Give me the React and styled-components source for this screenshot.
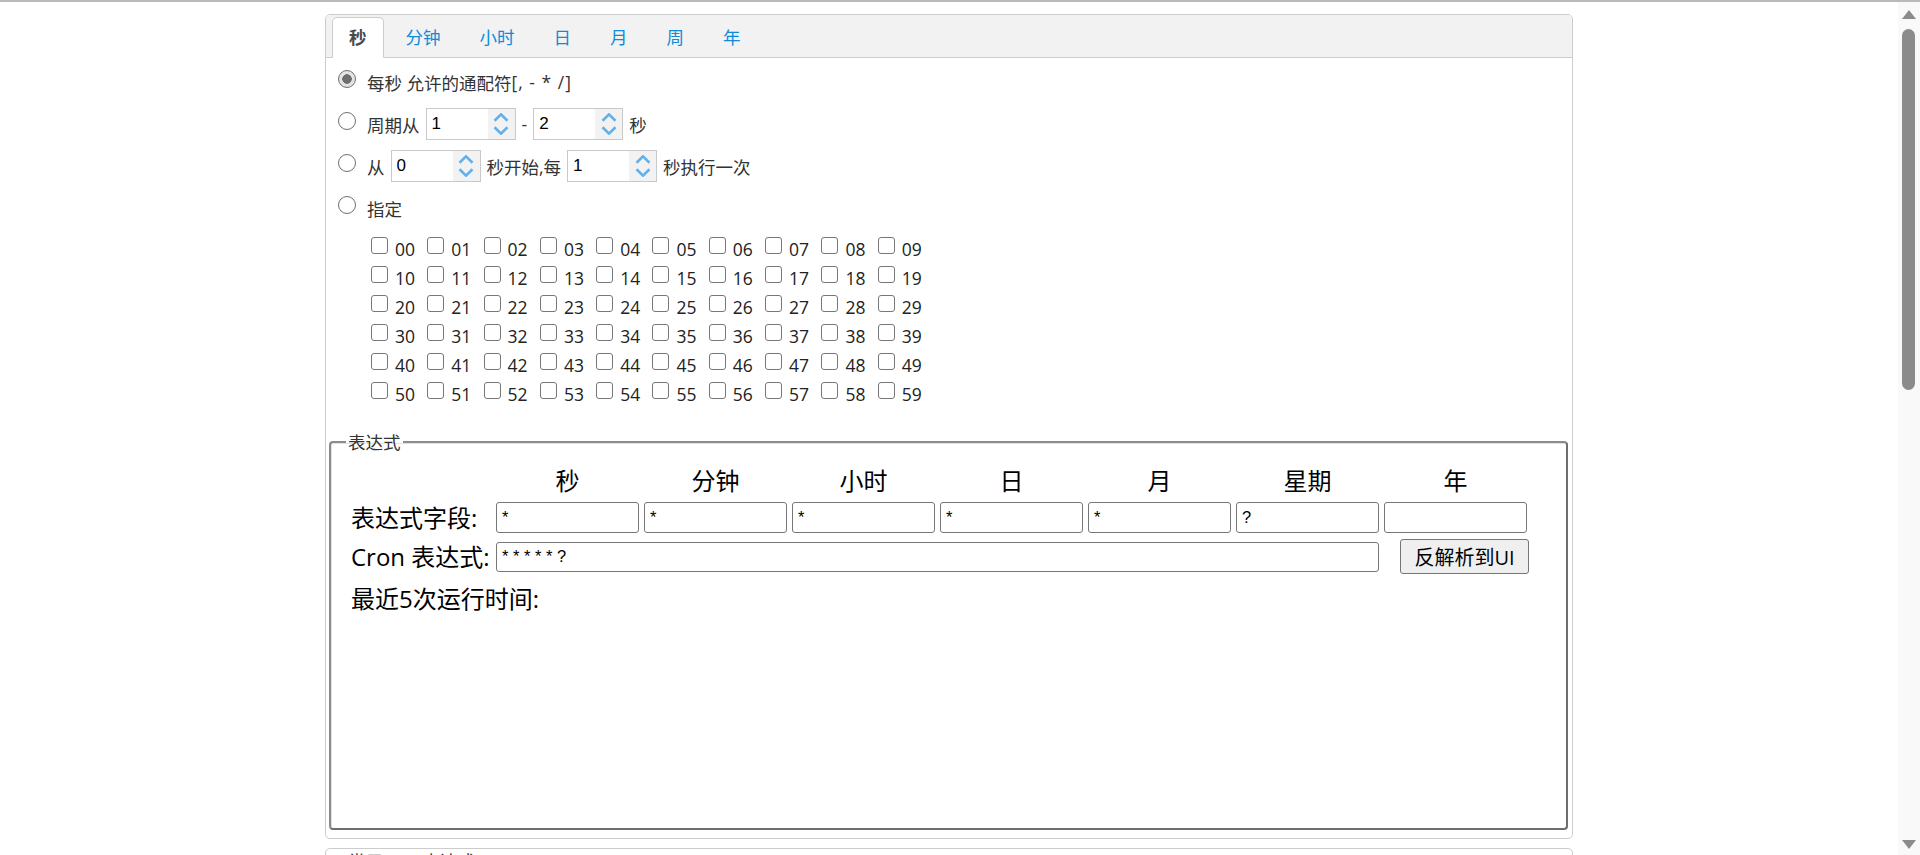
import styled, { createGlobalStyle } from "styled-components";

const GlobalStyle = createGlobalStyle`
  html {
    background: #fff;
    scrollbar-width: none;
  }
  body {
    margin: 0;
    border-top: 2px solid #b9b9b9;
    font-family: "Open Sans", "Noto Sans CJK SC", sans-serif;
    color: #333;
  }
`;

const Page = styled.div`
  padding: 12px 22px 10px 0;
`;

/* drawing of the window scrollbar, pinned over the right edge */
const ScrollRail = styled.div`
  position: fixed;
  top: 2px;
  right: 0;
  bottom: 0;
  width: 22px;
  display: flex;
  flex-direction: column;
  align-items: center;
  background: #f9f9f9;
`;

const RailArrow = styled.div`
  width: 0;
  height: 0;
  margin: ${({ $down }) => ($down ? "0 1px 6px 0" : "8px 1px 0 0")};
  border-left: 7px solid transparent;
  border-right: 7px solid transparent;
  ${({ $down }) =>
    $down ? "border-top: 9px solid #8b8b8b;" : "border-bottom: 9px solid #8b8b8b;"}
`;

const RailThumb = styled.div`
  width: 13px;
  height: 361px;
  margin: 10px 1px 0 0;
  border-radius: 7px;
  background: #8b8b8b;
`;

const RailSpace = styled.div`
  flex: 1;
`;

const Panel = styled.div`
  width: 1246px;
  margin: ${({ $second }) => ($second ? "9px auto 0" : "0 auto")};
  border: 1px solid #cccccc;
  border-radius: 5px;
  overflow: hidden;
  background: #fff;
`;

const TabBar = styled.div`
  display: flex;
  align-items: flex-end;
  height: 42px;
  padding-left: 6px;
  background: #f2f2f2;
  border-bottom: 1px solid #cccccc;
`;

const Tab = styled.div`
  height: 39px;
  line-height: 39px;
  padding: 0 16px;
  margin-right: 5px;
  margin-bottom: -1px;
  font-size: 17.5px;
  border: 1px solid ${({ $active }) => ($active ? "#cccccc" : "transparent")};
  border-bottom-color: ${({ $active }) => ($active ? "#fff" : "transparent")};
  border-radius: 5px 5px 0 0;
  background: ${({ $active }) => ($active ? "#fff" : "transparent")};
  color: ${({ $active }) => ($active ? "#4a4a4a" : "#0f8bd9")};
  font-weight: ${({ $active }) => ($active ? 700 : 400)};
  cursor: pointer;
`;

const TabBody = styled.div`
  padding: 3px 4px 8px 3px;
`;

const OptionRow = styled.div`
  display: flex;
  align-items: center;
  height: 42px;
  padding-left: 9px;
  font-size: 17.5px;
  color: #333;
  white-space: nowrap;
`;

const Wildcards = styled.span`
  letter-spacing: 1px;
`;

const Radio = styled.input.attrs({ type: "radio" })`
  appearance: none;
  flex: none;
  box-sizing: border-box;
  width: 18px;
  height: 18px;
  margin: 0 11px 6px 0;
  border: 1.5px solid #707070;
  border-radius: 50%;
  background: ${({ checked }) =>
    checked
      ? "radial-gradient(circle, #6f6f6f 0 4.5px, #e4e4e4 5px 100%)"
      : "#fff"};
`;

const SpinnerBox = styled.span`
  display: inline-flex;
  box-sizing: border-box;
  width: 90px;
  height: 32px;
  margin: 0 6px;
  border: 1px solid #c9c9c9;
  background: #fff;
`;

const SpinnerInput = styled.input`
  flex: 1;
  min-width: 0;
  border: none;
  outline: none;
  padding: 0 0 0 5px;
  font-family: "Liberation Sans", Arial, sans-serif;
  font-size: 17px;
  color: #000;
  background: transparent;
`;

const SpinButtons = styled.span`
  display: flex;
  flex-direction: column;
  width: 27px;
  background: #f2f2f2;
`;

const SpinArrow = styled.span`
  flex: 1;
  display: flex;
  justify-content: center;
  align-items: ${({ $down }) => ($down ? "flex-start" : "flex-end")};
  padding: ${({ $down }) => ($down ? "3px 0 0" : "0 0 1px")};
`;

const Chevron = ({ down }) => (
  <svg width="16" height="9" viewBox="0 0 16 9">
    <polyline
      points={down ? "1.5,1.2 8,7.6 14.5,1.2" : "1.5,7.8 8,1.4 14.5,7.8"}
      fill="none"
      stroke="#62b1ea"
      strokeWidth="2.6"
      strokeLinejoin="miter"
    />
  </svg>
);

function NumberSpinner({ value }) {
  return (
    <SpinnerBox>
      <SpinnerInput defaultValue={value} />
      <SpinButtons>
        <SpinArrow>
          <Chevron />
        </SpinArrow>
        <SpinArrow $down>
          <Chevron down />
        </SpinArrow>
      </SpinButtons>
    </SpinnerBox>
  );
}

const SecondGrid = styled.div`
  display: grid;
  grid-template-columns: repeat(10, 56.3px);
  grid-auto-rows: 29px;
  margin: 5px 0 0 42px;
`;

const SecondCell = styled.label`
  display: flex;
  align-items: center;
  gap: 7px;
  font-size: 17.5px;
  color: #222;
`;

const Checkbox = styled.input.attrs({ type: "checkbox" })`
  appearance: none;
  flex: none;
  box-sizing: border-box;
  width: 17px;
  height: 17px;
  margin: 0 0 7px;
  border: 1.5px solid #777;
  border-radius: 3px;
  background: #fff;
`;

const ExprSet = styled.fieldset`
  margin: 22px 0 0;
  padding: 12px 20px 0;
  border-style: solid;
  border-width: 2px;
  border-color: #8c8c8c #6e6e6e #6e6e6e #8c8c8c;
  border-radius: 4px;
  box-shadow: inset 1px 1px 0 #e2e2e2;
  min-width: 0;
`;

const Legend = styled.legend`
  margin-left: -5px;
  padding: 0 2px;
  font-size: 17.5px;
  line-height: 24px;
  color: #333;
`;

const ExprGrid = styled.div`
  display: grid;
  grid-template-columns: 140px repeat(7, 143px);
  grid-template-rows: 30px 31px 35px;
  column-gap: 5px;
  row-gap: 6px;
  align-items: center;
`;

const ColHead = styled.div`
  text-align: center;
  font-size: 24px;
  line-height: 30px;
  color: #000;
`;

const RowLabel = styled.div`
  font-size: 24px;
  line-height: 30px;
  color: #000;
  white-space: nowrap;
`;

const FieldInput = styled.input`
  box-sizing: border-box;
  width: 100%;
  height: ${({ $tall }) => ($tall ? "30px" : "31px")};
  padding: 0 5px;
  border: 1px solid #767676;
  border-radius: 3px;
  font-family: "Liberation Sans", Arial, sans-serif;
  font-size: 16.5px;
  color: #000;
  background: #fff;
  grid-column: ${({ $span }) => ($span ? `span ${$span}` : "auto")};
`;

const ParseButton = styled.button`
  justify-self: end;
  box-sizing: border-box;
  width: 129px;
  height: 35px;
  margin-right: -2px;
  padding: 0;
  border: 1px solid #767676;
  border-radius: 3px;
  background: #efefef;
  font-family: "Open Sans", "Noto Sans CJK SC", sans-serif;
  font-size: 20px;
  color: #000;
`;

const RunTimes = styled.div`
  margin-top: 10px;
  font-size: 24px;
  line-height: 30px;
  color: #000;
`;

const TimesArea = styled.div`
  height: 214px;
`;

const CommonBody = styled.div`
  padding: 0 4px 8px 3px;
`;

const CommonSet = styled.fieldset`
  margin: 0;
  padding: 12px 20px;
  border: 2px solid #b5b5b5;
  border-radius: 4px;
  min-width: 0;
`;

const CommonRow = styled.div`
  display: flex;
  align-items: center;
  height: 43px;
  font-size: 17.5px;
  color: #333;
`;

const CommonExpr = styled.span`
  width: 260px;
  font-family: "Liberation Mono", monospace;
  color: #0f8bd9;
`;

const tabs = ["秒", "分钟", "小时", "日", "月", "周", "年"];
const heads = ["秒", "分钟", "小时", "日", "月", "星期", "年"];
const fields = ["*", "*", "*", "*", "*", "?", ""];
const seconds = Array.from({ length: 60 }, (_, i) => String(i).padStart(2, "0"));

const commons = [
  ["0 0 2 1 * ? *", "表示在每月的1日的凌晨2点调整任务"],
  ["0 15 10 ? * MON-FRI", "表示周一到周五每天上午10:15执行作业"],
  ["0 15 10 ? 6L 2002-2006", "表示2002-2006年的每个月的最后一个星期五上午10:15执行作业"],
  ["0 0 10,14,16 * * ?", "每天上午10点，下午2点，4点"],
  ["0 0/30 9-17 * * ?", "朝九晚五工作时间内每半小时"],
  ["0 0 12 ? * WED", "表示每个星期三中午12点"],
  ["0 0 12 * * ?", "每天中午12点触发"],
  ["0 15 10 ? * *", "每天上午10:15触发"],
  ["0 15 10 * * ?", "每天上午10:15触发"],
  ["0 15 10 * * ? *", "每天上午10:15触发"],
  ["0 15 10 * * ? 2005", "2005年的每天上午10:15触发"],
  ["0 * 14 * * ?", "在每天下午2点到下午2:59期间的每1分钟触发"],
  ["0 0/5 14 * * ?", "在每天下午2点到下午2:55期间的每5分钟触发"],
  ["0 0/5 14,18 * * ?", "在每天下午2点到2:55期间和下午6点到6:55期间的每5分钟触发"],
  ["0 0-5 14 * * ?", "在每天下午2点到下午2:05期间的每1分钟触发"],
  ["0 10,44 14 ? 3 WED", "每年三月的星期三的下午2:10和2:44触发"],
  ["0 15 10 ? * MON-FRI", "周一至周五的上午10:15触发"],
  ["0 15 10 15 * ?", "每月15日上午10:15触发"],
  ["0 15 10 L * ?", "每月最后一日的上午10:15触发"],
  ["0 15 10 ? * 6L", "每月的最后一个星期五上午10:15触发"],
  ["0 15 10 ? * 6L 2002-2005", "2002年至2005年的每月的最后一个星期五上午10:15触发"],
  ["0 15 10 ? * 6#3", "每月的第三个星期五上午10:15触发"],
];

export default function App() {
  return (
    <>
      <GlobalStyle />
      <Page>
        <Panel>
          <TabBar>
            {tabs.map(t => (
              <Tab key={t} $active={t === "秒"}>
                {t}
              </Tab>
            ))}
          </TabBar>
          <TabBody>
            <OptionRow>
              <Radio name="second" defaultChecked checked readOnly />
              每秒 允许的通配符<Wildcards>[, - * /]</Wildcards>
            </OptionRow>
            <OptionRow>
              <Radio name="second" readOnly />
              周期从
              <NumberSpinner value="1" />-
              <NumberSpinner value="2" />秒
            </OptionRow>
            <OptionRow>
              <Radio name="second" readOnly />
              从
              <NumberSpinner value="0" />
              秒开始,每
              <NumberSpinner value="1" />
              秒执行一次
            </OptionRow>
            <OptionRow>
              <Radio name="second" readOnly />
              指定
            </OptionRow>
            <SecondGrid>
              {seconds.map(s => (
                <SecondCell key={s}>
                  <Checkbox />
                  {s}
                </SecondCell>
              ))}
            </SecondGrid>

            <ExprSet>
              <Legend>表达式</Legend>
              <ExprGrid>
                <div />
                {heads.map((h, i) => (
                  <ColHead key={i}>{h}</ColHead>
                ))}
                <RowLabel>表达式字段:</RowLabel>
                {fields.map((f, i) => (
                  <FieldInput key={i} defaultValue={f} readOnly />
                ))}
                <RowLabel>Cron 表达式:</RowLabel>
                <FieldInput $span={6} $tall defaultValue="* * * * * ?" readOnly />
                <ParseButton>反解析到UI</ParseButton>
              </ExprGrid>
              <RunTimes>最近5次运行时间:</RunTimes>
              <TimesArea />
            </ExprSet>
          </TabBody>
        </Panel>

        <Panel $second>
          <CommonBody>
            <CommonSet>
              <Legend>常用Cron表达式</Legend>
              {commons.map(([expr, desc], i) => (
                <CommonRow key={i}>
                  <CommonExpr>{expr}</CommonExpr>
                  {desc}
                </CommonRow>
              ))}
            </CommonSet>
          </CommonBody>
        </Panel>
      </Page>
      <ScrollRail>
        <RailArrow />
        <RailThumb />
        <RailSpace />
        <RailArrow $down />
      </ScrollRail>
    </>
  );
}
